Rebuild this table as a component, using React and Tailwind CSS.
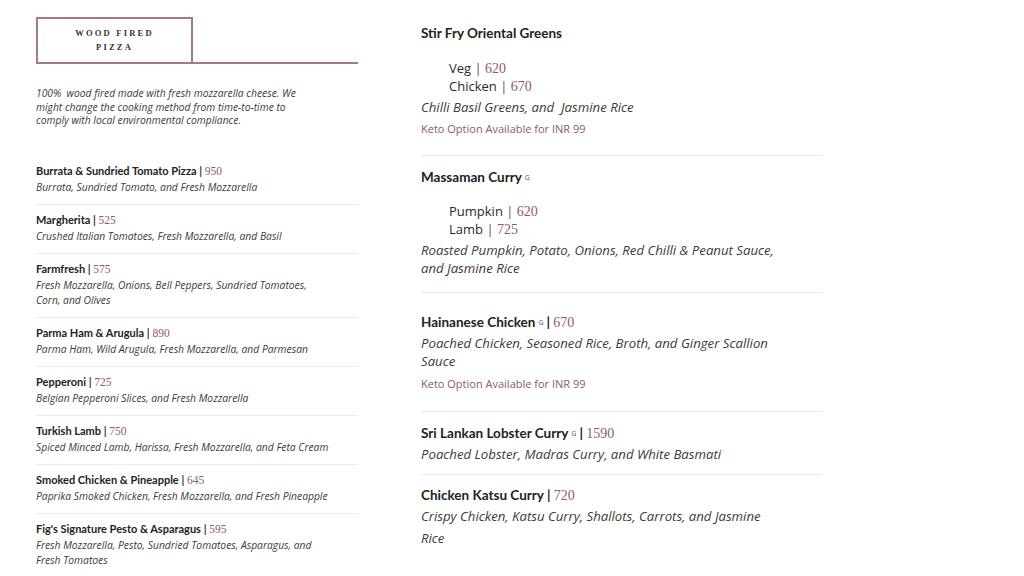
import React from "react";

const bold = "font-['Lato','Open_Sans',sans-serif]";
const body = "font-['Open_Sans','Lato',sans-serif]";
const serif = "font-['Liberation_Serif','DejaVu_Serif',serif]";

function Price({ value, size = "text-[11.5px]" }) {
  return (
    <span className={`${serif} ${size} font-normal text-[#8f5a6d] oldstyle-nums`}>{value}</span>
  );
}

const pizzas = [
  { name: "Burrata & Sundried Tomato Pizza", price: "950", desc: ["Burrata, Sundried Tomato, and Fresh Mozzarella"] },
  { name: "Margherita", price: "525", desc: ["Crushed Italian Tomatoes, Fresh Mozzarella, and Basil"] },
  { name: "Farmfresh", price: "575", desc: ["Fresh Mozzarella, Onions, Bell Peppers, Sundried Tomatoes,", "Corn, and Olives"] },
  { name: "Parma Ham & Arugula", price: "890", desc: ["Parma Ham, Wild Arugula, Fresh Mozzarella, and Parmesan"] },
  { name: "Pepperoni", price: "725", desc: ["Belgian Pepperoni Slices, and Fresh Mozzarella"] },
  { name: "Turkish Lamb", price: "750", desc: ["Spiced Minced Lamb, Harissa, Fresh Mozzarella, and Feta Cream"] },
  { name: "Smoked Chicken & Pineapple", price: "645", desc: ["Paprika Smoked Chicken, Fresh Mozzarella, and Fresh Pineapple"] },
  { name: "Fig's Signature Pesto & Asparagus", price: "595", desc: ["Fresh Mozzarella, Pesto, Sundried Tomatoes, Asparagus, and", "Fresh Tomatoes"] },
];

function G() {
  return <sup className={`${body} text-[7px] font-normal text-[#555] ml-[3px] mr-[3px] relative top-[-2px]`}>G</sup>;
}

function Title({ children }) {
  return <div className={`${bold} text-[13.5px] leading-[16px] font-bold text-[#222]`}>{children}</div>;
}

function Desc({ children, className = "" }) {
  return (
    <div className={`${body} italic text-[13.2px] text-[#3a3a3a] whitespace-nowrap ${className}`}>{children}</div>
  );
}

function Keto({ className = "" }) {
  return (
    <div className={`${body} text-[11px] leading-[14px] text-[#8b5a6e] ${className}`}>Keto Option Available for INR 99</div>
  );
}

function Sub({ label, price }) {
  return (
    <div className={`${body} text-[13px] leading-[17.5px] text-[#2a2a2a]`}>
      {label} <span className="text-[#555]">|</span> <Price value={price} size="text-[14px]" />
    </div>
  );
}

export default function App() {
  return (
    <div className="w-[1024px] h-[576px] bg-white flex overflow-hidden">
      {/* Left column */}
      <div className="ml-[36px] w-[322px] pt-[17px] shrink-0">
        <div className="border-b-2 border-[#a6788a]">
          <div className="w-[157px] h-[45px] border-t-2 border-x-2 border-[#a6788a] flex flex-col items-center justify-center">
            <div className={`${serif} font-bold text-[8.5px] leading-[13.5px] tracking-[2.2px] text-[#333] text-center`}>
              WOOD FIRED
              <br />
              PIZZA
            </div>
          </div>
        </div>
        <p className={`${body} italic text-[10.3px] leading-[13.7px] text-[#3a3a3a] mt-[23px] max-w-[276px]`}>
          100%&nbsp; wood fired made with fresh mozzarella cheese. We might change the cooking method from time-to-time to comply with local environmental compliance.
        </p>
        <div className="mt-[28px]">
          {pizzas.map((p, i) => (
            <div
              key={p.name}
              className={`pt-[8px] pb-[9px] ${i < pizzas.length - 1 ? "border-b border-[#ebebeb]" : ""}`}
            >
              <div className={`${bold} text-[11px] leading-[14px] font-bold text-[#222]`}>
                {p.name} <span className="text-[#333]">|</span> <Price value={p.price} />
              </div>
              <div className={`${body} italic text-[10.3px] leading-[15px] text-[#3a3a3a] mt-[2px] whitespace-nowrap`}>
                {p.desc.map((line, j) => (
                  <div key={j}>{line}</div>
                ))}
              </div>
            </div>
          ))}
        </div>
      </div>

      {/* Right column */}
      <div className="ml-[63px] w-[401px] shrink-0">
        <div className="pt-[25px] pb-[19px] border-b border-[#ebebeb]">
          <Title>Stir Fry Oriental Greens</Title>
          <div className="pl-[28px] mt-[19px]">
            <Sub label="Veg" price="620" />
            <Sub label="Chicken" price="670" />
          </div>
          <Desc className="leading-[17px] mt-[4px]">Chilli Basil Greens, and&nbsp; Jasmine Rice</Desc>
          <Keto className="mt-[6px]" />
        </div>

        <div className="pt-[13px] pb-[15px] border-b border-[#ebebeb]">
          <Title>
            Massaman Curry<G />
          </Title>
          <div className="pl-[28px] mt-[18px]">
            <Sub label="Pumpkin" price="620" />
            <Sub label="Lamb" price="725" />
          </div>
          <Desc className="leading-[17.6px] mt-[4px]">
            <div>Roasted Pumpkin, Potato, Onions, Red Chilli &amp; Peanut Sauce,</div>
            <div>and Jasmine Rice</div>
          </Desc>
        </div>

        <div className="pt-[21px] pb-[20px] border-b border-[#ebebeb]">
          <Title>
            Hainanese Chicken<G />| <Price value="670" size="text-[14px]" />
          </Title>
          <Desc className="leading-[17.6px] mt-[4px]">
            <div>Poached Chicken, Seasoned Rice, Broth, and Ginger Scallion</div>
            <div>Sauce</div>
          </Desc>
          <Keto className="mt-[7px]" />
        </div>

        <div className="pt-[13px] pb-[11px] border-b border-[#ebebeb]">
          <Title>
            Sri Lankan Lobster Curry<G />| <Price value="1590" size="text-[14px]" />
          </Title>
          <Desc className="leading-[17px] mt-[4px]">Poached Lobster, Madras Curry, and White Basmati</Desc>
        </div>

        <div className="pt-[12px]">
          <Title>
            Chicken Katsu Curry | <Price value="720" size="text-[14px]" />
          </Title>
          <Desc className="leading-[21.6px] mt-[2px]">
            <div>Crispy Chicken, Katsu Curry, Shallots, Carrots, and Jasmine</div>
            <div>Rice</div>
          </Desc>
        </div>
      </div>
    </div>
  );
}
